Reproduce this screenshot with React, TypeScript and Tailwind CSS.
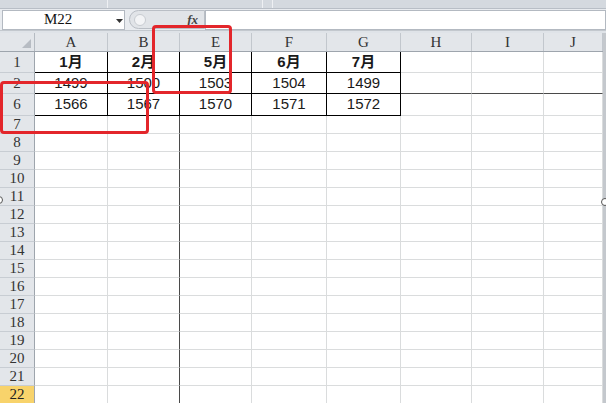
import React from 'react';

type Row = {
  label: string;
  h: string;
  cells?: string[];
  bold?: boolean;
  freeze?: boolean;
  selected?: boolean;
};

const columns = [
  { name: 'A', w: 'w-[73px]' },
  { name: 'B', w: 'w-[72px]' },
  { name: 'E', w: 'w-[72px]' },
  { name: 'F', w: 'w-[75px]' },
  { name: 'G', w: 'w-[74px]' },
  { name: 'H', w: 'w-[71px]' },
  { name: 'I', w: 'w-[72px]' },
  { name: 'J', w: 'w-[59px]' },
];

const rows: Row[] = [
  { label: '1', h: 'h-[21px]', cells: ['1月', '2月', '5月', '6月', '7月'], bold: true },
  { label: '2', h: 'h-[21px]', cells: ['1499', '1500', '1503', '1504', '1499'], freeze: true },
  { label: '6', h: 'h-[22px]', cells: ['1566', '1567', '1570', '1571', '1572'] },
  ...['7', '8', '9', '10', '11', '12', '13', '14', '15', '16', '17', '18', '19', '20', '21'].map((n) => ({
    label: n,
    h: 'h-[18px]',
  })),
  { label: '22', h: 'h-[18px]', selected: true },
];

// SimSun-ish headers: a light serif reads closest
const headerFont = "font-['Liberation_Serif',serif]";

const Cell: React.FC<{ row: Row; col: number }> = ({ row, col }) => {
  const inTable = !!row.cells && col < 5;
  const value = row.cells?.[col];
  const right = inTable ? 'border-r-black' : col === 1 ? 'border-r-[#4a4a4a]' : 'border-r-[#dadcdd]';
  const bottom = inTable ? 'border-b-black' : row.freeze ? 'border-b-[#4a4a4a]' : 'border-b-[#dadcdd]';
  return (
    <div
      className={`${columns[col].w} h-full shrink-0 border-r border-b ${right} ${bottom} flex items-center justify-center text-[15px] text-[#1a1a1a] ${
        row.bold ? 'font-bold' : ''
      }`}
    >
      {value}
    </div>
  );
};

const FormulaBar: React.FC = () => (
  <div className="h-[22px] flex items-center bg-[#e8ebef] border-b border-[#c3c8ce]">
    <div className="ml-[2px] w-[123px] h-[20px] bg-white border border-[#b3b9c1] flex items-center relative">
      <span className={`ml-[41px] text-[15px] text-[#111] ${headerFont}`}>M22</span>
      <svg className="absolute left-[113px] top-[8px]" width="7" height="4" viewBox="0 0 7 4">
        <path d="M0 0 H7 L3.5 4 Z" fill="#333" />
      </svg>
    </div>
    <div className="ml-[4px] w-[76px] h-[19px] rounded-l-full bg-[#e1e4e8] border border-[#b9bec5] flex items-center">
      <div className="ml-[4px] w-[12px] h-[12px] rounded-full bg-[#f3f4f6] border border-[#c8ccd1]" />
      <span className="ml-auto mr-[6px] text-[13px] italic font-bold text-[#444] font-['Liberation_Serif',serif]">
        fx
      </span>
    </div>
    <div className="flex-1 h-[20px] bg-white border border-[#b3b9c1]" />
  </div>
);

const App: React.FC = () => {
  return (
    <div className="relative w-[606px] h-[403px] overflow-hidden bg-white font-['Liberation_Sans','Noto_Sans_CJK_SC',sans-serif]">
      {/* ribbon remnant */}
      <div className="h-[9px] bg-[#d4d9df] border-b border-[#b8bec6] flex">
        <div className="w-[108px] border-r border-[#eef0f3]" />
        <div className="w-[155px] border-r border-[#eef0f3]" />
        <div className="w-[10px] border-r border-[#eef0f3]" />
      </div>

      <FormulaBar />
      <div className="h-[2px] bg-[#dfe3e8]" />

      <div className="flex">
        <div className="flex-1">
          {/* column headers */}
          <div className={`flex h-[19px] bg-[#e3e6ea] border-b border-[#9ea5ad] ${headerFont} text-[15px] text-[#333]`}>
            <div className="w-[35px] shrink-0 border-r border-[#b5bbc2] flex items-end justify-end p-[3px]">
              <svg width="9" height="9" viewBox="0 0 9 9">
                <path d="M9 0 V9 H0 Z" fill="#b7bcc3" />
              </svg>
            </div>
            {columns.map((c) => (
              <div key={c.name} className={`${c.w} shrink-0 border-r border-[#c2c7cd] flex items-center justify-center`}>
                {c.name}
              </div>
            ))}
          </div>

          {rows.map((row) => (
            <div key={row.label} className={`flex ${row.h}`}>
              <div
                className={`w-[35px] shrink-0 border-r border-b border-r-[#9ea5ad] border-b-[#c8cdd3] flex items-center justify-center text-[15px] ${headerFont} ${
                  row.selected ? 'bg-[#f8d36b] text-[#222]' : 'bg-[#e3e6ea] text-[#333]'
                }`}
              >
                {row.label}
              </div>
              {columns.map((c, i) => (
                <Cell key={c.name} row={row} col={i} />
              ))}
            </div>
          ))}
        </div>
        <div className="w-[3px] bg-[#c4c8cd]" />
      </div>

      {/* annotation boxes */}
      <div className="absolute left-[152px] top-[25px] w-[80px] h-[69px] border-[3px] border-[#e3262b] rounded-[4px]" />
      <div className="absolute left-0 top-[81px] w-[149px] h-[53px] border-[3px] border-[#e3262b] rounded-[4px]" />

      {/* resize handles */}
      <div className="absolute -left-[5px] top-[196px] w-[8px] h-[8px] rounded-full bg-white border border-[#555]" />
      <div className="absolute left-[601px] top-[198px] w-[8px] h-[8px] rounded-full bg-white border border-[#555]" />
    </div>
  );
};

export default App;
